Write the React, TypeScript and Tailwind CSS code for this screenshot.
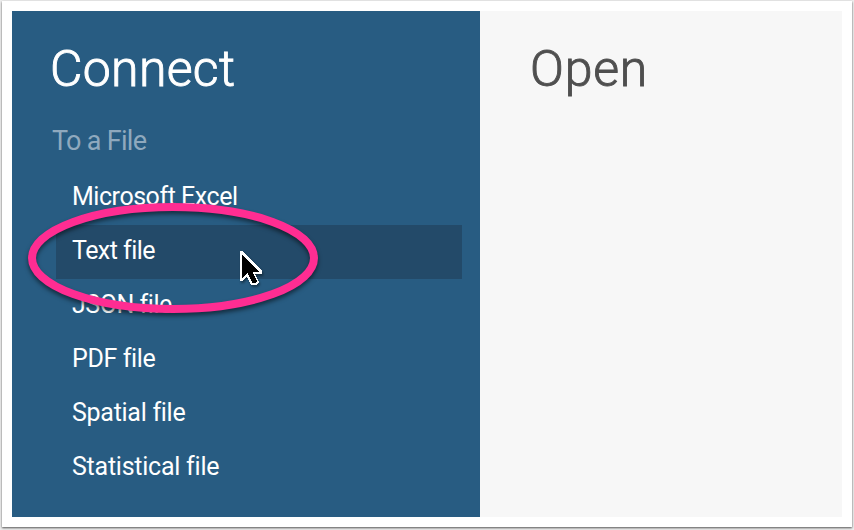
const files = [
  { name: 'Microsoft Excel', spacing: 'tracking-[-0.46px]' },
  { name: 'Text file', spacing: 'tracking-[-0.55px]', active: true },
  { name: 'JSON file', spacing: 'tracking-[-0.45px]' },
  { name: 'PDF file', spacing: 'tracking-[-0.38px]' },
  { name: 'Spatial file', spacing: 'tracking-[-0.28px]' },
  { name: 'Statistical file', spacing: 'tracking-[-0.24px]' },
];

function Highlight() {
  return (
    <svg className="pointer-events-none absolute left-0 top-0 h-[530px] w-[854px]" viewBox="0 0 854 530" fill="none">
      <ellipse cx="173" cy="258" rx="141" ry="51" stroke="#ff2d92" strokeWidth="8" className="drop-shadow-[0_3px_2px_rgba(0,0,0,0.5)]" />
      <g className="drop-shadow-[1px_2px_1px_rgba(0,0,0,0.4)]" shapeRendering="crispEdges">
        <path d="M240 251V281H242.5L247 276.5L251 285H257L259 282L255 273.5H262V271L242 251Z" fill="#fff" />
        <path d="M242 254.5V278L247.5 272.5L252.5 283H255.5L257 281.5L252 271.5H259Z" fill="#000" />
      </g>
    </svg>
  );
}

export default function App() {
  return (
    <div className="relative h-[530px] w-[854px] overflow-hidden bg-[#ededed] pl-[2px] pt-px font-['Roboto','Liberation_Sans',sans-serif]">
      <main className="flex h-[526px] w-[850px] bg-white px-[10px] py-[10px] shadow-[0_1px_2px_rgba(0,0,0,0.65)]">
        <section className="h-[506px] w-[468px] bg-[#285c82] pt-[28px] text-white">
          <h1 className="ml-[38px] whitespace-nowrap text-[50px] font-light leading-[60px] tracking-[0.3px] [-webkit-text-stroke:0.9px_#fff]">Connect</h1>
          <h2 className="ml-[40px] mt-[24px] text-[27px] leading-[36px] tracking-[-0.7px] text-[#8fa9be]">To a File</h2>
          <ul className="ml-[44px] mt-[12px] w-[406px]">
            {files.map((file) => (
              <li
                key={file.name}
                className={`h-[54px] whitespace-nowrap pl-4 text-[25px] leading-[52px] ${file.spacing} ${file.active ? 'bg-[#234a69]' : ''}`}
              >
                {file.name}
              </li>
            ))}
          </ul>
        </section>
        <section className="h-[506px] w-[362px] bg-[#f7f7f7] pt-[28px] text-[#4f4f4f]">
          <h1 className="ml-[50px] text-[50px] font-light leading-[60px] tracking-[0.8px] [-webkit-text-stroke:0.9px_#4f4f4f]">Open</h1>
        </section>
      </main>
      <Highlight />
    </div>
  );
}
